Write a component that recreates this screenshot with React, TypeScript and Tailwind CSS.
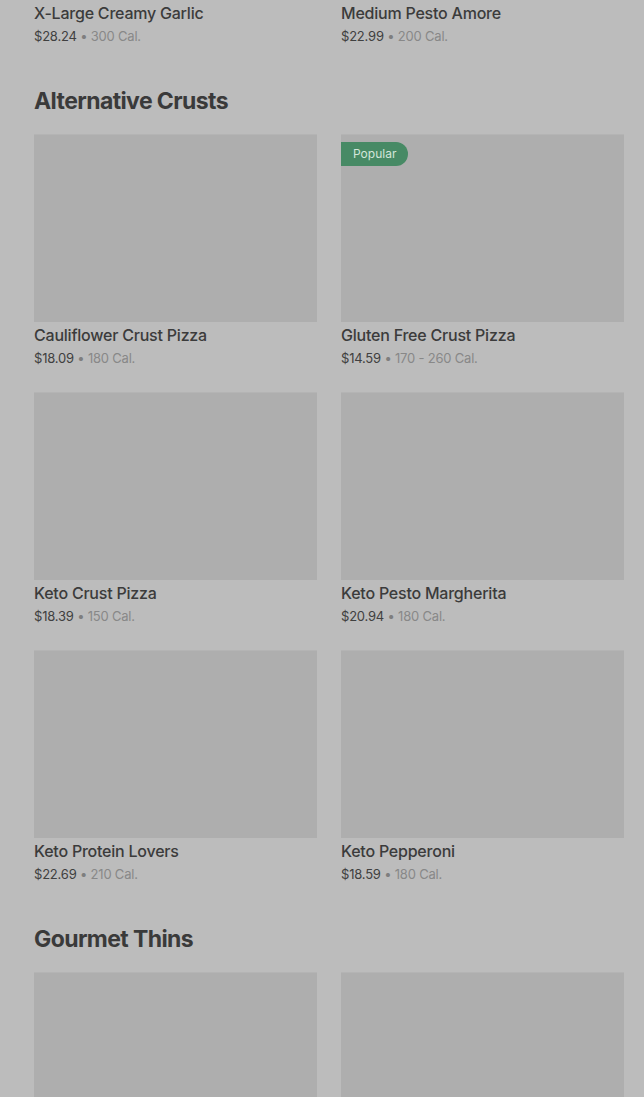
import React from "react";

type Item = { name: string; price: string; cal: string; popular?: boolean };

const prev: Item[] = [
  { name: "X-Large Creamy Garlic", price: "$28.24", cal: "300 Cal." },
  { name: "Medium Pesto Amore", price: "$22.99", cal: "200 Cal." },
];

const alt: Item[] = [
  { name: "Cauliflower Crust Pizza", price: "$18.09", cal: "180 Cal." },
  { name: "Gluten Free Crust Pizza", price: "$14.59", cal: "170 - 260 Cal.", popular: true },
  { name: "Keto Crust Pizza", price: "$18.39", cal: "150 Cal." },
  { name: "Keto Pesto Margherita", price: "$20.94", cal: "180 Cal." },
  { name: "Keto Protein Lovers", price: "$22.69", cal: "210 Cal." },
  { name: "Keto Pepperoni", price: "$18.59", cal: "180 Cal." },
];

function Text({ item }: { item: Item }) {
  return (
    <div>
      <div className="mt-[1px] text-[16px] leading-[24px] font-medium tracking-[-0.22px] text-[#3b3b3b] truncate">
        {item.name}
      </div>
      <div className="mt-[1px] text-[13px] leading-[20px] tracking-[-0.2px] text-[#404040]">
        {item.price}
        <span className="text-[#7e7e7e]"> • </span>
        <span className="text-[#888888]">{item.cal}</span>
      </div>
    </div>
  );
}

function Card({ item }: { item: Item }) {
  return (
    <div className="flex flex-col">
      <div className="relative h-[188px] bg-[#aeaeae] border-t border-[#b4b4b4]">
        {item.popular && (
          <div className="absolute left-0 top-[7px] h-[24px] pl-[12px] pr-[12px] rounded-r-full bg-[#478a65] text-[12px] leading-[24px] text-[#d3e6da]">
            Popular
          </div>
        )}
      </div>
      <Text item={item} />
    </div>
  );
}

export default function App() {
  return (
    <div
      className="w-[644px] h-[1097px] overflow-hidden bg-[#bcbcbc] pl-[34px] pr-[20px]"
      style={{ fontFamily: "Inter, 'Noto Sans', sans-serif" }}
    >
      <div className="-mt-[1px] grid grid-cols-2 gap-x-[24px]">
        {prev.map((p) => (
          <div key={p.name} className="border-t border-[#b3b3b3]">
            <Text item={p} />
          </div>
        ))}
      </div>

      <h2 className="mt-[39px] text-[23px] leading-[32px] font-bold tracking-[-0.6px] text-[#3a3a3a]">
        Alternative Crusts
      </h2>
      <div className="mt-[17px] grid grid-cols-2 gap-x-[24px] gap-y-[24px]">
        {alt.map((a) => (
          <Card key={a.name} item={a} />
        ))}
      </div>

      <h2 className="mt-[39px] text-[23px] leading-[32px] font-bold tracking-[-0.6px] text-[#3a3a3a]">
        Gourmet Thins
      </h2>
      <div className="mt-[17px] grid grid-cols-2 gap-x-[24px]">
        <div className="h-[188px] bg-[#aeaeae] border-t border-[#b4b4b4]" />
        <div className="h-[188px] bg-[#aeaeae] border-t border-[#b4b4b4]" />
      </div>
    </div>
  );
}
